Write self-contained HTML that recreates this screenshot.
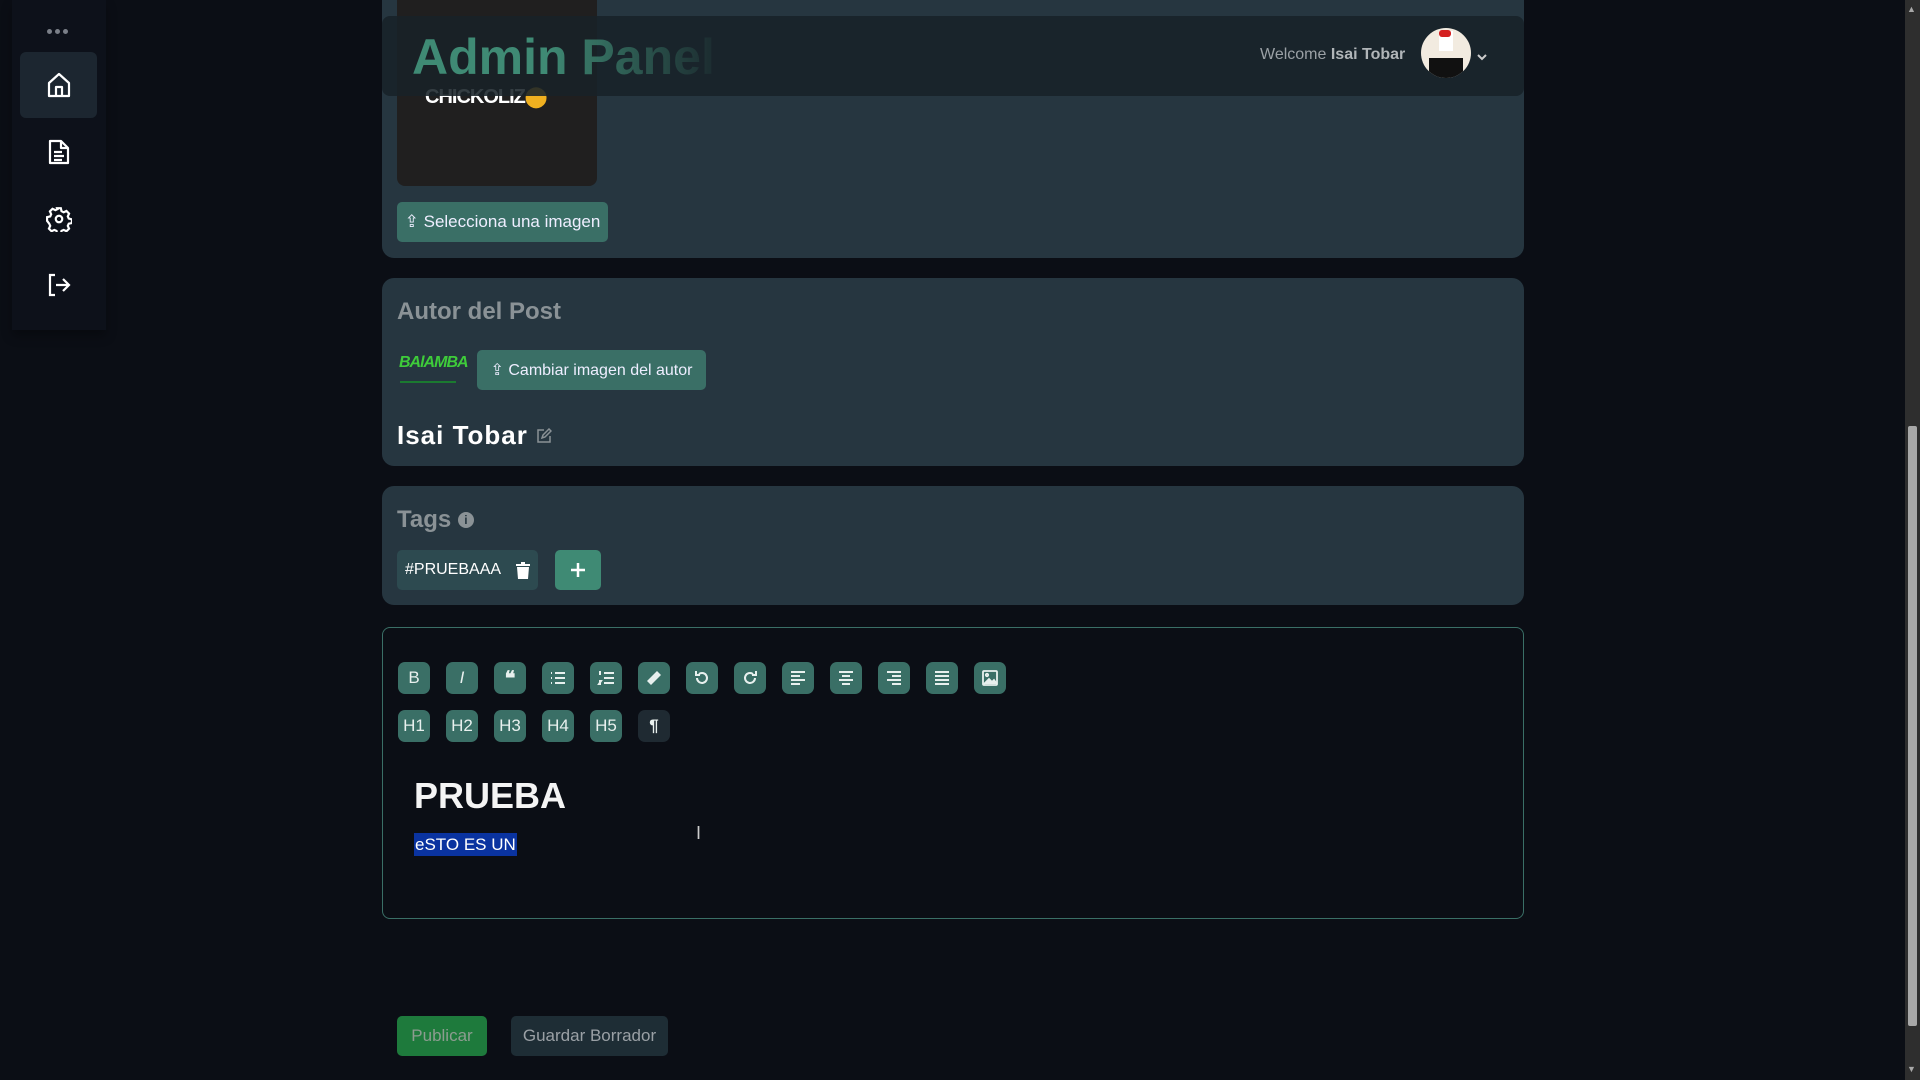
<!DOCTYPE html>
<html><head><meta charset="utf-8">
<style>
*{box-sizing:border-box;margin:0;padding:0}
html,body{width:1920px;height:1080px;overflow:hidden;background:#0b0e15;font-family:"Liberation Sans",sans-serif;color:#e8e8e8}
.abs{position:absolute}
.side{left:12px;top:0;width:94px;height:330px;background:#0d111a;box-shadow:0 6px 10px rgba(0,0,0,.3)}
.sbtn{position:absolute;left:20px;width:77px;height:66px;border-radius:6px;display:flex;align-items:center;justify-content:center}
.card{position:absolute;left:382px;width:1142px;background:#263640;border-radius:12px}
.btn{position:absolute;background:#3a6f66;border-radius:5px;color:#eef;font-size:17px;display:flex;align-items:center;justify-content:center;gap:6px;white-space:nowrap}
.tb{position:absolute;width:32px;height:32px;border-radius:7px;background:#3a6f66;display:flex;align-items:center;justify-content:center;color:#e8f0ee;font-size:17px}
.tb svg{width:18px;height:18px}
</style></head><body>
<div class="abs side"></div>
<div class="abs" style="left:47px;top:29px;width:22px;height:6px;display:flex;gap:3px"><i style="width:5px;height:5px;border-radius:50%;background:#7a7f88"></i><i style="width:5px;height:5px;border-radius:50%;background:#7a7f88"></i><i style="width:5px;height:5px;border-radius:50%;background:#7a7f88"></i></div>
<div class="sbtn" style="top:52px;background:#1c2630"><svg width="24" height="26" viewBox="0 0 24 26" fill="none" stroke="#fff" stroke-width="2.2" stroke-linejoin="round"><path d="M2 11L12 2l10 9v13H2z"/><path d="M9 24v-9h6v9"/></svg></div>
<div class="sbtn" style="top:119px"><svg width="22" height="26" viewBox="0 0 22 26" fill="none" stroke="#fff" stroke-width="2.2" stroke-linejoin="round"><path d="M2 2h11l7 7v15H2z"/><path d="M13 2v7h7M6 13h8M6 17h10M6 21h8"/></svg></div>
<div class="sbtn" style="top:186px"><svg width="26" height="26" viewBox="0 0 24 24" fill="none" stroke="#fff" stroke-width="2"><circle cx="12" cy="12" r="3"/><path d="M10.3 2h3.4l.6 2.8 2 1 2.6-1.2 2.4 2.4-1.2 2.6.9 2 2.9.7v3.4l-2.9.6-.9 2 1.2 2.6-2.4 2.4-2.6-1.2-2 .9-.6 2.9h-3.4l-.6-2.9-2-.9-2.6 1.2-2.4-2.4 1.2-2.6-.9-2L1 13.7v-3.4l2.9-.7.9-2-1.2-2.6L6 2.6 8.7 3.8l2-1z"/></svg></div>
<div class="sbtn" style="top:252px"><svg width="24" height="24" viewBox="0 0 24 24" fill="none" stroke="#fff" stroke-width="2.2"><path d="M8 2H3v20h5"/><path d="M9 12h12M16 6l6 6-6 6"/></svg></div>

<div class="card" style="top:-20px;height:278px"></div>
<div class="abs" style="left:397px;top:0;width:200px;height:186px;background:#201f1f;border-radius:0 0 8px 8px"></div>
<div class="abs" style="left:425px;top:84px;font-size:20px;color:#fff;letter-spacing:-1px;font-weight:bold">CHICKOLIZ<span style="color:#f0b020">⬤</span></div>
<div class="abs" style="left:382px;top:16px;width:1142px;height:80px;background:rgba(24,34,40,.88);border-radius:8px"></div>
<div class="abs" style="left:412px;top:28px;font-size:50px;font-weight:bold;white-space:nowrap;background:linear-gradient(90deg,#3f8a74 0%,#3f8a74 45%,rgba(50,100,85,.15) 100%);-webkit-background-clip:text;background-clip:text;color:transparent;width:300px">Admin Panel</div>
<div class="abs" style="left:1260px;top:46px;font-size:16px;color:#9aa0a5">Welcome <b style="color:#b0b5b8">Isai Tobar</b></div>
<div class="abs" style="left:1421px;top:28px;width:50px;height:50px;border-radius:50%;background:#f2ebe0;overflow:hidden"><div style="position:absolute;left:18px;top:3px;width:14px;height:20px;background:#fff"></div><div style="position:absolute;left:18px;top:2px;width:12px;height:7px;background:#d42020;border-radius:3px"></div><div style="position:absolute;left:8px;top:30px;width:34px;height:20px;background:#111"></div></div>
<div class="abs" style="left:1476px;top:48px"><svg width="12" height="8" viewBox="0 0 12 8" fill="none" stroke="#ccc" stroke-width="2"><path d="M2 2l4 4 4-4"/></svg></div>
<div class="btn" style="left:397px;top:202px;width:211px;height:40px">⇪ Selecciona una imagen</div>

<div class="card" style="top:278px;height:188px"></div>
<div class="abs" style="left:397px;top:298px;font-size:24px;font-weight:bold;color:#8a9296">Autor del Post</div>
<div class="abs" style="left:399px;top:354px;font-size:16px;font-weight:bold;font-style:italic;color:#3ecc3a;letter-spacing:-1px">BAlAMBA</div>
<div class="abs" style="left:400px;top:381px;width:56px;height:2px;background:#1b7a30"></div>
<div class="btn" style="left:477px;top:350px;width:229px;height:40px;font-size:16px">⇪ Cambiar imagen del autor</div>
<div class="abs" style="left:397px;top:420px;font-size:26px;font-weight:bold;color:#fff;letter-spacing:1px">Isai Tobar <svg width="16" height="16" viewBox="0 0 16 16" fill="none" stroke="#8a9296" stroke-width="1.5"><path d="M8 2H2v12h12V8"/><path d="M6 10l1-3 6-6 2 2-6 6z"/></svg></div>

<div class="card" style="top:486px;height:119px"></div>
<div class="abs" style="left:397px;top:506px;font-size:24px;font-weight:bold;color:#8a9296">Tags <span style="display:inline-block;width:16px;height:16px;border-radius:50%;background:#8a9296;color:#263640;font-size:12px;text-align:center;line-height:16px;vertical-align:3px">i</span></div>
<div class="abs" style="left:397px;top:550px;width:141px;height:40px;background:#2d4a50;border-radius:5px;font-size:16px;color:#fff;padding:11px 0 0 8px">#PRUEBAAA<svg style="position:absolute;left:119px;top:12px" width="14" height="17" viewBox="0 0 14 17" fill="#fff"><rect x="0" y="2" width="14" height="2"/><rect x="5" y="0" width="4" height="2"/><path d="M1 5h12l-1 12H2z"/></svg></div>
<div class="btn" style="left:555px;top:550px;width:46px;height:40px;background:#3f8a74"><svg width="16" height="16" viewBox="0 0 16 16" stroke="#fff" stroke-width="2.5"><path d="M8 1v14M1 8h14"/></svg></div>

<div class="abs" style="left:382px;top:627px;width:1142px;height:292px;border:1px solid #3a6f66;border-radius:8px;background:#0b0e15"></div>
<div class="tb" style="left:398px;top:662px">B</div>
<div class="tb" style="left:446px;top:662px;font-style:italic">I</div>
<div class="tb" style="left:494px;top:662px;font-weight:bold;font-size:20px">❝</div>
<div class="tb" style="left:542px;top:662px"><svg viewBox="0 0 18 18" fill="none" stroke="#e8f0ee" stroke-width="2"><path d="M6 4h10M6 9h10M6 14h10M2 4h1M2 9h1M2 14h1"/></svg></div>
<div class="tb" style="left:590px;top:662px"><svg viewBox="0 0 18 18" fill="none" stroke="#e8f0ee" stroke-width="2"><path d="M7 4h10M7 9h10M7 14h10M2 3h1v3M2 12h2l-2 3h2"/></svg></div>
<div class="tb" style="left:638px;top:662px"><svg viewBox="0 0 18 18" fill="#e8f0ee"><path d="M12 2l4 4-10 10-4-4z"/></svg></div>
<div class="tb" style="left:686px;top:662px"><svg viewBox="0 0 18 18" fill="none" stroke="#e8f0ee" stroke-width="2"><path d="M4 9a5 5 0 1 0 2-4M3 2v4h4"/></svg></div>
<div class="tb" style="left:734px;top:662px"><svg viewBox="0 0 18 18" fill="none" stroke="#e8f0ee" stroke-width="2"><path d="M14 9a5 5 0 1 1-2-4M15 2v4h-4"/></svg></div>
<div class="tb" style="left:782px;top:662px"><svg viewBox="0 0 18 18" fill="none" stroke="#e8f0ee" stroke-width="2"><path d="M2 3h14M2 7h9M2 11h14M2 15h9"/></svg></div>
<div class="tb" style="left:830px;top:662px"><svg viewBox="0 0 18 18" fill="none" stroke="#e8f0ee" stroke-width="2"><path d="M2 3h14M5 7h8M2 11h14M5 15h8"/></svg></div>
<div class="tb" style="left:878px;top:662px"><svg viewBox="0 0 18 18" fill="none" stroke="#e8f0ee" stroke-width="2"><path d="M2 3h14M7 7h9M2 11h14M7 15h9"/></svg></div>
<div class="tb" style="left:926px;top:662px"><svg viewBox="0 0 18 18" fill="none" stroke="#e8f0ee" stroke-width="2"><path d="M2 3h14M2 7h14M2 11h14M2 15h14"/></svg></div>
<div class="tb" style="left:974px;top:662px"><svg viewBox="0 0 18 18" fill="none" stroke="#e8f0ee" stroke-width="1.8"><rect x="2" y="2" width="14" height="14" rx="1"/><path d="M3 15l5-5 3 3 2-2 3 4" fill="#e8f0ee"/><circle cx="6" cy="6" r="1.2"/></svg></div>
<div class="tb" style="left:398px;top:710px">H1</div>
<div class="tb" style="left:446px;top:710px">H2</div>
<div class="tb" style="left:494px;top:710px">H3</div>
<div class="tb" style="left:542px;top:710px">H4</div>
<div class="tb" style="left:590px;top:710px">H5</div>
<div class="tb" style="left:638px;top:710px;background:#1f2a32;font-weight:bold">¶</div>
<div class="abs" style="left:414px;top:775px;font-size:36px;font-weight:bold;color:#f4f4f4">PRUEBA</div>
<div class="abs" style="left:414px;top:833px;height:23px;padding:2px 1px;background:#0a33a0;font-size:17px;color:#fff">eSTO ES UN</div>
<div class="abs" style="left:696px;top:823px;font-size:18px;color:#ccc">I</div>

<div class="abs" style="left:397px;top:1016px;width:90px;height:40px;background:#1e7a3c;border-radius:5px;color:#8c9c90;font-size:17px;text-align:center;line-height:40px">Publicar</div>
<div class="abs" style="left:511px;top:1016px;width:157px;height:40px;background:#1e2d35;border-radius:5px;color:#9aa0a5;font-size:17px;text-align:center;line-height:40px">Guardar Borrador</div>

<div class="abs" style="left:1905px;top:0;width:15px;height:1080px;background:#2e2e2e"></div>
<div class="abs" style="left:1908px;top:426px;width:9px;height:600px;background:#a8a8a8;border-radius:2px"></div>
<div class="abs" style="left:1907px;top:4px;font-size:9px;color:#a8a8a8">▲</div>
<div class="abs" style="left:1907px;top:1064px;font-size:9px;color:#a8a8a8">▼</div>
</body></html>
